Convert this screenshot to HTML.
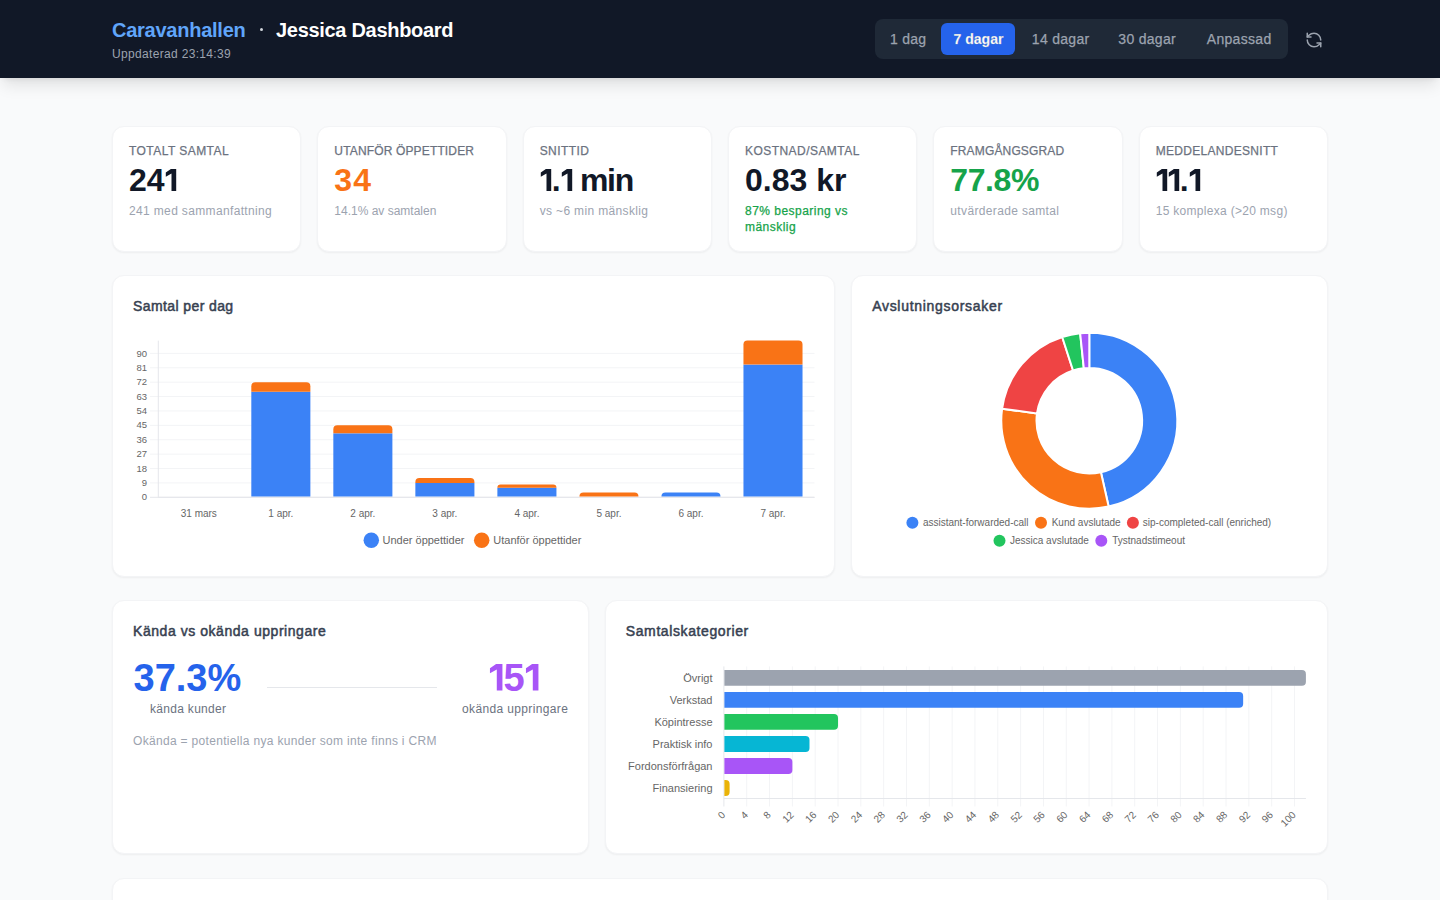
<!DOCTYPE html>
<html lang="sv">
<head>
<meta charset="utf-8">
<title>Jessica Dashboard</title>
<style>
*{box-sizing:border-box;margin:0;padding:0}
html,body{width:1440px;height:900px;overflow:hidden}
body{background:#f9fafb;font-family:"Liberation Sans",sans-serif;position:relative;color:#111827}
.hdr{position:absolute;left:0;top:0;width:1440px;height:78px;background:#111827;box-shadow:0 10px 15px -3px rgba(0,0,0,.1),0 4px 6px -4px rgba(0,0,0,.1);z-index:2}
.t{position:absolute;white-space:nowrap;line-height:1}
.brand{left:112px;top:20px;font-size:20px;font-weight:700;color:#60a5fa;letter-spacing:-.25px}
.dot{position:absolute;left:259.9px;top:28.1px;width:3px;height:3px;border-radius:50%;background:#d1d5db}
.title{left:276px;top:20px;font-size:20px;font-weight:700;color:#fff;letter-spacing:-.3px}
.upd{left:112px;top:48px;font-size:12px;color:#9ca3af;letter-spacing:.33px}
.grp{position:absolute;left:875px;top:19px;width:413px;height:40px;background:#1f2937;border-radius:8px}
.btn{position:absolute;top:4px;height:32px;border-radius:6px;font-size:14px;line-height:32px;text-align:center;color:#9ca3af;font-weight:400;letter-spacing:.3px;text-indent:.3px;-webkit-text-stroke:.25px #9ca3af}
.btn.on{background:#2563eb;color:#fff;font-weight:700;letter-spacing:0;text-indent:1px}
.card{position:absolute;background:#fff;border:1px solid #f3f4f6;border-radius:12px;box-shadow:0 1px 2px rgba(0,0,0,.05)}
.kl{position:absolute;left:16px;top:18px;font-size:12px;line-height:1;color:#6b7280;text-transform:uppercase;letter-spacing:.45px;white-space:nowrap;-webkit-text-stroke:.25px #6b7280}
.kv{position:absolute;left:16px;top:37px;font-size:32px;line-height:1;font-weight:700;color:#111827;white-space:nowrap}
.ks{position:absolute;left:16px;top:76px;font-size:12px;line-height:16px;color:#9ca3af;white-space:nowrap;letter-spacing:.35px}
.ct{position:absolute;left:20px;top:23px;font-size:14px;line-height:1;font-weight:400;color:#374151;white-space:nowrap;-webkit-text-stroke:.5px #374151;letter-spacing:.5px}
svg text{font-family:"Liberation Sans",sans-serif}
.big{position:absolute;font-size:38px;line-height:1;font-weight:700;white-space:nowrap}
.sm{position:absolute;font-size:12px;line-height:1;color:#6b7280;white-space:nowrap}
.divl{position:absolute;left:154px;top:86px;width:170px;height:1px;background:#e5e7eb}
.note{position:absolute;left:20px;top:133.5px;font-size:12px;line-height:1;color:#9ca3af;white-space:nowrap;letter-spacing:.32px}
.one{display:inline-block;vertical-align:baseline;fill:currentColor}
.ov{position:absolute;left:0;top:0;z-index:1;pointer-events:none}
</style>
</head>
<body>
<div class="hdr">
  <div class="t brand">Caravanhallen</div>
  <div class="dot"></div>
  <div class="t title">Jessica Dashboard</div>
  <div class="t upd">Uppdaterad 23:14:39</div>
  <div class="grp">
    <div class="btn" style="left:4px;width:58px">1 dag</div>
    <div class="btn on" style="left:66px;width:74px">7 dagar</div>
    <div class="btn" style="left:145px;width:81px">14 dagar</div>
    <div class="btn" style="left:231px;width:82px">30 dagar</div>
    <div class="btn" style="left:317px;width:94px">Anpassad</div>
  </div>
  <svg style="position:absolute;left:1305px;top:30.5px" width="18" height="18" viewBox="0 0 24 24" fill="none" stroke="#9ca3af" stroke-width="2" stroke-linecap="round" stroke-linejoin="round"><path d="M21 12a9 9 0 0 0-9-9 9.75 9.75 0 0 0-6.74 2.74L3 8"/><path d="M3 3v5h5"/><path d="M3 12a9 9 0 0 0 9 9 9.75 9.75 0 0 0 6.74-2.74L21 16"/><path d="M16 16h5v5"/></svg>
</div>

<!-- KPI cards -->
<div class="card" style="left:112px;top:126px;width:189.33px;height:126px">
  <div class="kl">Totalt samtal</div><div class="kv">24<svg class="one" width="12" height="22" viewBox="0 0 12 22"><path d="M0.8 3.5L5.9 0H11.2V22H6.5V4.6L0.8 7.7Z"/></svg></div><div class="ks">241 med sammanfattning</div>
</div>
<div class="card" style="left:317.33px;top:126px;width:189.33px;height:126px">
  <div class="kl" style="letter-spacing:.15px">Utanför öppettider</div><div class="kv" style="color:#f97316;letter-spacing:1px">34</div><div class="ks" style="letter-spacing:0">14.1% av samtalen</div>
</div>
<div class="card" style="left:522.67px;top:126px;width:189.33px;height:126px">
  <div class="kl">Snittid</div><div class="kv"><svg class="one" width="12" height="22" viewBox="0 0 12 22"><path d="M0.8 3.5L5.9 0H11.2V22H6.5V4.6L0.8 7.7Z"/></svg>.<svg class="one" width="12" height="22" viewBox="0 0 12 22"><path d="M0.8 3.5L5.9 0H11.2V22H6.5V4.6L0.8 7.7Z"/></svg> <span style="letter-spacing:-1.3px;margin-left:-1.5px">min</span></div><div class="ks">vs ~6 min mänsklig</div>
</div>
<div class="card" style="left:728px;top:126px;width:189.33px;height:126px">
  <div class="kl">Kostnad/samtal</div><div class="kv">0.83 kr</div><div class="ks" style="color:#16a34a;letter-spacing:.47px;-webkit-text-stroke:.25px #16a34a">87% besparing vs<br>mänsklig</div>
</div>
<div class="card" style="left:933.33px;top:126px;width:189.33px;height:126px">
  <div class="kl" style="letter-spacing:.15px">Framgångsgrad</div><div class="kv" style="color:#16a34a;letter-spacing:-.4px">77.8%</div><div class="ks">utvärderade samtal</div>
</div>
<div class="card" style="left:1138.67px;top:126px;width:189.33px;height:126px">
  <div class="kl" style="letter-spacing:.3px">Meddelandesnitt</div><div class="kv"><svg class="one" width="12" height="22" viewBox="0 0 12 22"><path d="M0.8 3.5L5.9 0H11.2V22H6.5V4.6L0.8 7.7Z"/></svg><svg class="one" width="12" height="22" viewBox="0 0 12 22"><path d="M0.8 3.5L5.9 0H11.2V22H6.5V4.6L0.8 7.7Z"/></svg>.<svg class="one" width="12" height="22" viewBox="0 0 12 22"><path d="M0.8 3.5L5.9 0H11.2V22H6.5V4.6L0.8 7.7Z"/></svg></div><div class="ks" style="letter-spacing:.3px">15 komplexa (&gt;20 msg)</div>
</div>

<!-- Row 2 -->
<div class="card" style="left:112px;top:275px;width:723.2px;height:302px">
  <div class="ct" style="letter-spacing:.4px">Samtal per dag</div>
</div>
<div class="card" style="left:851.2px;top:275px;width:476.8px;height:302px">
  <div class="ct" style="letter-spacing:.7px">Avslutningsorsaker</div>
</div>

<!-- Row 3 -->
<div class="card" style="left:112px;top:600px;width:476.8px;height:254px">
  <div class="ct" style="letter-spacing:.55px">Kända vs okända uppringare</div>
  <div class="big" style="left:20.5px;top:57.5px;color:#2563eb">37.3%</div>
  <div class="sm" style="left:37px;top:101.5px;letter-spacing:.3px">kända kunder</div>
  <div class="divl"></div>
  <div class="big" style="left:376px;top:57.5px;color:#a855f7"><svg class="one" width="14.4" height="26.4" viewBox="0 0 12 22"><path d="M0.8 3.5L5.9 0H11.2V22H6.5V4.6L0.8 7.7Z"/></svg>5<svg class="one" width="14.4" height="26.4" viewBox="0 0 12 22"><path d="M0.8 3.5L5.9 0H11.2V22H6.5V4.6L0.8 7.7Z"/></svg></div>
  <div class="sm" style="left:349px;top:101.5px;letter-spacing:.36px">okända uppringare</div>
  <div class="note">Okända = potentiella nya kunder som inte finns i CRM</div>
</div>
<div class="card" style="left:604.8px;top:600px;width:723.2px;height:254px">
  <div class="ct" style="letter-spacing:.6px">Samtalskategorier</div>
</div>

<!-- Row 4 -->
<div class="card" style="left:112px;top:878px;width:1216px;height:200px"></div>

<svg class="ov" width="1440" height="900" viewBox="0 0 1440 900">
<line x1="150" y1="497.3" x2="814.5" y2="497.3" stroke="#e5e7eb" stroke-width="1"/>
<text x="147" y="500.4" text-anchor="end" font-size="9.5" fill="#666">0</text>
<line x1="150" y1="482.91" x2="814.5" y2="482.91" stroke="#f3f4f6" stroke-width="1"/>
<text x="147" y="486.01" text-anchor="end" font-size="9.5" fill="#666">9</text>
<line x1="150" y1="468.52" x2="814.5" y2="468.52" stroke="#f3f4f6" stroke-width="1"/>
<text x="147" y="471.62" text-anchor="end" font-size="9.5" fill="#666">18</text>
<line x1="150" y1="454.13" x2="814.5" y2="454.13" stroke="#f3f4f6" stroke-width="1"/>
<text x="147" y="457.23" text-anchor="end" font-size="9.5" fill="#666">27</text>
<line x1="150" y1="439.74" x2="814.5" y2="439.74" stroke="#f3f4f6" stroke-width="1"/>
<text x="147" y="442.84" text-anchor="end" font-size="9.5" fill="#666">36</text>
<line x1="150" y1="425.35" x2="814.5" y2="425.35" stroke="#f3f4f6" stroke-width="1"/>
<text x="147" y="428.45" text-anchor="end" font-size="9.5" fill="#666">45</text>
<line x1="150" y1="410.96" x2="814.5" y2="410.96" stroke="#f3f4f6" stroke-width="1"/>
<text x="147" y="414.06" text-anchor="end" font-size="9.5" fill="#666">54</text>
<line x1="150" y1="396.57" x2="814.5" y2="396.57" stroke="#f3f4f6" stroke-width="1"/>
<text x="147" y="399.67" text-anchor="end" font-size="9.5" fill="#666">63</text>
<line x1="150" y1="382.18" x2="814.5" y2="382.18" stroke="#f3f4f6" stroke-width="1"/>
<text x="147" y="385.28" text-anchor="end" font-size="9.5" fill="#666">72</text>
<line x1="150" y1="367.79" x2="814.5" y2="367.79" stroke="#f3f4f6" stroke-width="1"/>
<text x="147" y="370.89" text-anchor="end" font-size="9.5" fill="#666">81</text>
<line x1="150" y1="353.4" x2="814.5" y2="353.4" stroke="#f3f4f6" stroke-width="1"/>
<text x="147" y="356.5" text-anchor="end" font-size="9.5" fill="#666">90</text>
<line x1="158.3" y1="340.61" x2="158.3" y2="497.3" stroke="#e5e7eb" stroke-width="1"/>
<line x1="158.3" y1="497.3" x2="814.5" y2="497.3" stroke="#e5e7eb" stroke-width="1"/>
<text x="198.81" y="516.9" text-anchor="middle" font-size="10" fill="#666">31 mars</text>
<text x="280.84" y="516.9" text-anchor="middle" font-size="10" fill="#666">1 apr.</text>
<rect x="251.31" y="391.77" width="59.06" height="104.73" fill="#3b82f6"/>
<path d="M251.31 391.77V386.18Q251.31 382.18 255.31 382.18H306.37Q310.37 382.18 310.37 386.18V391.77Z" fill="#f97316"/>
<text x="362.86" y="516.9" text-anchor="middle" font-size="10" fill="#666">2 apr.</text>
<rect x="333.33" y="433.34" width="59.06" height="63.16" fill="#3b82f6"/>
<path d="M333.33 433.34V429.35Q333.33 425.35 337.33 425.35H388.39Q392.39 425.35 392.39 429.35V433.34Z" fill="#f97316"/>
<text x="444.89" y="516.9" text-anchor="middle" font-size="10" fill="#666">3 apr.</text>
<rect x="415.36" y="482.91" width="59.06" height="13.59" fill="#3b82f6"/>
<path d="M415.36 482.91V482.11Q415.36 478.11 419.36 478.11H470.42Q474.42 478.11 474.42 482.11V482.91Z" fill="#f97316"/>
<text x="526.91" y="516.9" text-anchor="middle" font-size="10" fill="#666">4 apr.</text>
<rect x="497.38" y="487.71" width="59.06" height="8.79" fill="#3b82f6"/>
<path d="M497.38 487.71V487.71Q497.38 484.51 500.58 484.51H553.24Q556.44 484.51 556.44 487.71V487.71Z" fill="#f97316"/>
<text x="608.94" y="516.9" text-anchor="middle" font-size="10" fill="#666">5 apr.</text>
<path d="M579.41 496.5V496.5Q579.41 492.5 583.41 492.5H634.47Q638.47 492.5 638.47 496.5V496.5Z" fill="#f97316"/>
<text x="690.96" y="516.9" text-anchor="middle" font-size="10" fill="#666">6 apr.</text>
<path d="M661.43 496.5V496.5Q661.43 492.5 665.43 492.5H716.49Q720.49 492.5 720.49 496.5V496.5Z" fill="#3b82f6"/>
<text x="772.99" y="516.9" text-anchor="middle" font-size="10" fill="#666">7 apr.</text>
<rect x="743.46" y="364.59" width="59.06" height="131.91" fill="#3b82f6"/>
<path d="M743.46 364.59V344.61Q743.46 340.61 747.46 340.61H798.52Q802.52 340.61 802.52 344.61V364.59Z" fill="#f97316"/>
<circle cx="371.3" cy="540.3" r="7.75" fill="#3b82f6"/>
<text x="382.5" y="543.8" font-size="11" fill="#666">Under öppettider</text>
<circle cx="481.7" cy="540.3" r="7.75" fill="#f97316"/>
<text x="493.3" y="543.8" font-size="11" fill="#666">Utanför öppettider</text>
<path d="M1089.3 332.7A88 88 0 0 1 1108.64 506.55L1100.91 472.21A52.8 52.8 0 0 0 1089.3 367.9Z" fill="#3b82f6" stroke="#fff" stroke-width="2" stroke-linejoin="round"/>
<path d="M1108.64 506.55A88 88 0 0 1 1002.12 408.69L1036.99 413.5A52.8 52.8 0 0 0 1100.91 472.21Z" fill="#f97316" stroke="#fff" stroke-width="2" stroke-linejoin="round"/>
<path d="M1002.12 408.69A88 88 0 0 1 1062.22 336.97L1073.05 370.46A52.8 52.8 0 0 0 1036.99 413.5Z" fill="#ef4444" stroke="#fff" stroke-width="2" stroke-linejoin="round"/>
<path d="M1062.22 336.97A88 88 0 0 1 1080.14 333.18L1083.8 368.19A52.8 52.8 0 0 0 1073.05 370.46Z" fill="#22c55e" stroke="#fff" stroke-width="2" stroke-linejoin="round"/>
<path d="M1080.14 333.18A88 88 0 0 1 1089.3 332.7L1089.3 367.9A52.8 52.8 0 0 0 1083.8 368.19Z" fill="#a855f7" stroke="#fff" stroke-width="2" stroke-linejoin="round"/>
<circle cx="912.4" cy="522.8" r="6" fill="#3b82f6"/>
<text x="922.9" y="526.4" font-size="10" fill="#666">assistant-forwarded-call</text>
<circle cx="1041" cy="522.8" r="6" fill="#f97316"/>
<text x="1051.7" y="526.4" font-size="10" fill="#666">Kund avslutade</text>
<circle cx="1132.9" cy="522.8" r="6" fill="#ef4444"/>
<text x="1142.8" y="526.4" font-size="10" fill="#666">sip-completed-call (enriched)</text>
<circle cx="999.5" cy="540.8" r="6" fill="#22c55e"/>
<text x="1010" y="544.4" font-size="10" fill="#666">Jessica avslutade</text>
<circle cx="1101.3" cy="540.8" r="6" fill="#a855f7"/>
<text x="1112.2" y="544.4" font-size="10" fill="#666">Tystnadstimeout</text>
<line x1="723.9" y1="666.4" x2="723.9" y2="806.5" stroke="#e5e7eb" stroke-width="1"/>
<text transform="translate(725.9 815.5) rotate(-45)" text-anchor="end" font-size="10" fill="#666">0</text>
<line x1="746.72" y1="666.4" x2="746.72" y2="806.5" stroke="#f3f4f6" stroke-width="1"/>
<text transform="translate(748.72 815.5) rotate(-45)" text-anchor="end" font-size="10" fill="#666">4</text>
<line x1="769.55" y1="666.4" x2="769.55" y2="806.5" stroke="#f3f4f6" stroke-width="1"/>
<text transform="translate(771.55 815.5) rotate(-45)" text-anchor="end" font-size="10" fill="#666">8</text>
<line x1="792.37" y1="666.4" x2="792.37" y2="806.5" stroke="#f3f4f6" stroke-width="1"/>
<text transform="translate(794.37 815.5) rotate(-45)" text-anchor="end" font-size="10" fill="#666">12</text>
<line x1="815.2" y1="666.4" x2="815.2" y2="806.5" stroke="#f3f4f6" stroke-width="1"/>
<text transform="translate(817.2 815.5) rotate(-45)" text-anchor="end" font-size="10" fill="#666">16</text>
<line x1="838.02" y1="666.4" x2="838.02" y2="806.5" stroke="#f3f4f6" stroke-width="1"/>
<text transform="translate(840.02 815.5) rotate(-45)" text-anchor="end" font-size="10" fill="#666">20</text>
<line x1="860.84" y1="666.4" x2="860.84" y2="806.5" stroke="#f3f4f6" stroke-width="1"/>
<text transform="translate(862.84 815.5) rotate(-45)" text-anchor="end" font-size="10" fill="#666">24</text>
<line x1="883.67" y1="666.4" x2="883.67" y2="806.5" stroke="#f3f4f6" stroke-width="1"/>
<text transform="translate(885.67 815.5) rotate(-45)" text-anchor="end" font-size="10" fill="#666">28</text>
<line x1="906.49" y1="666.4" x2="906.49" y2="806.5" stroke="#f3f4f6" stroke-width="1"/>
<text transform="translate(908.49 815.5) rotate(-45)" text-anchor="end" font-size="10" fill="#666">32</text>
<line x1="929.32" y1="666.4" x2="929.32" y2="806.5" stroke="#f3f4f6" stroke-width="1"/>
<text transform="translate(931.32 815.5) rotate(-45)" text-anchor="end" font-size="10" fill="#666">36</text>
<line x1="952.14" y1="666.4" x2="952.14" y2="806.5" stroke="#f3f4f6" stroke-width="1"/>
<text transform="translate(954.14 815.5) rotate(-45)" text-anchor="end" font-size="10" fill="#666">40</text>
<line x1="974.96" y1="666.4" x2="974.96" y2="806.5" stroke="#f3f4f6" stroke-width="1"/>
<text transform="translate(976.96 815.5) rotate(-45)" text-anchor="end" font-size="10" fill="#666">44</text>
<line x1="997.79" y1="666.4" x2="997.79" y2="806.5" stroke="#f3f4f6" stroke-width="1"/>
<text transform="translate(999.79 815.5) rotate(-45)" text-anchor="end" font-size="10" fill="#666">48</text>
<line x1="1020.61" y1="666.4" x2="1020.61" y2="806.5" stroke="#f3f4f6" stroke-width="1"/>
<text transform="translate(1022.61 815.5) rotate(-45)" text-anchor="end" font-size="10" fill="#666">52</text>
<line x1="1043.44" y1="666.4" x2="1043.44" y2="806.5" stroke="#f3f4f6" stroke-width="1"/>
<text transform="translate(1045.44 815.5) rotate(-45)" text-anchor="end" font-size="10" fill="#666">56</text>
<line x1="1066.26" y1="666.4" x2="1066.26" y2="806.5" stroke="#f3f4f6" stroke-width="1"/>
<text transform="translate(1068.26 815.5) rotate(-45)" text-anchor="end" font-size="10" fill="#666">60</text>
<line x1="1089.08" y1="666.4" x2="1089.08" y2="806.5" stroke="#f3f4f6" stroke-width="1"/>
<text transform="translate(1091.08 815.5) rotate(-45)" text-anchor="end" font-size="10" fill="#666">64</text>
<line x1="1111.91" y1="666.4" x2="1111.91" y2="806.5" stroke="#f3f4f6" stroke-width="1"/>
<text transform="translate(1113.91 815.5) rotate(-45)" text-anchor="end" font-size="10" fill="#666">68</text>
<line x1="1134.73" y1="666.4" x2="1134.73" y2="806.5" stroke="#f3f4f6" stroke-width="1"/>
<text transform="translate(1136.73 815.5) rotate(-45)" text-anchor="end" font-size="10" fill="#666">72</text>
<line x1="1157.56" y1="666.4" x2="1157.56" y2="806.5" stroke="#f3f4f6" stroke-width="1"/>
<text transform="translate(1159.56 815.5) rotate(-45)" text-anchor="end" font-size="10" fill="#666">76</text>
<line x1="1180.38" y1="666.4" x2="1180.38" y2="806.5" stroke="#f3f4f6" stroke-width="1"/>
<text transform="translate(1182.38 815.5) rotate(-45)" text-anchor="end" font-size="10" fill="#666">80</text>
<line x1="1203.2" y1="666.4" x2="1203.2" y2="806.5" stroke="#f3f4f6" stroke-width="1"/>
<text transform="translate(1205.2 815.5) rotate(-45)" text-anchor="end" font-size="10" fill="#666">84</text>
<line x1="1226.03" y1="666.4" x2="1226.03" y2="806.5" stroke="#f3f4f6" stroke-width="1"/>
<text transform="translate(1228.03 815.5) rotate(-45)" text-anchor="end" font-size="10" fill="#666">88</text>
<line x1="1248.85" y1="666.4" x2="1248.85" y2="806.5" stroke="#f3f4f6" stroke-width="1"/>
<text transform="translate(1250.85 815.5) rotate(-45)" text-anchor="end" font-size="10" fill="#666">92</text>
<line x1="1271.68" y1="666.4" x2="1271.68" y2="806.5" stroke="#f3f4f6" stroke-width="1"/>
<text transform="translate(1273.68 815.5) rotate(-45)" text-anchor="end" font-size="10" fill="#666">96</text>
<line x1="1294.5" y1="666.4" x2="1294.5" y2="806.5" stroke="#f3f4f6" stroke-width="1"/>
<text transform="translate(1296.5 815.5) rotate(-45)" text-anchor="end" font-size="10" fill="#666">100</text>
<line x1="723.9" y1="798.5" x2="1305.91" y2="798.5" stroke="#e5e7eb" stroke-width="1"/>
<text x="712.5" y="681.91" text-anchor="end" font-size="11" fill="#666">Övrigt</text>
<path d="M724.4 669.98H1301.91Q1305.91 669.98 1305.91 673.98V681.83Q1305.91 685.83 1301.91 685.83H724.4Z" fill="#9ca3af"/>
<text x="712.5" y="703.92" text-anchor="end" font-size="11" fill="#666">Verkstad</text>
<path d="M724.4 692H1239.15Q1243.15 692 1243.15 696V703.85Q1243.15 707.85 1239.15 707.85H724.4Z" fill="#3b82f6"/>
<text x="712.5" y="725.94" text-anchor="end" font-size="11" fill="#666">Köpintresse</text>
<path d="M724.4 714.02H834.02Q838.02 714.02 838.02 718.02V725.87Q838.02 729.87 834.02 729.87H724.4Z" fill="#22c55e"/>
<text x="712.5" y="747.96" text-anchor="end" font-size="11" fill="#666">Praktisk info</text>
<path d="M724.4 736.03H805.49Q809.49 736.03 809.49 740.03V747.88Q809.49 751.88 805.49 751.88H724.4Z" fill="#06b6d4"/>
<text x="712.5" y="769.98" text-anchor="end" font-size="11" fill="#666">Fordonsförfrågan</text>
<path d="M724.4 758.05H788.37Q792.37 758.05 792.37 762.05V769.9Q792.37 773.9 788.37 773.9H724.4Z" fill="#a855f7"/>
<text x="712.5" y="791.99" text-anchor="end" font-size="11" fill="#666">Finansiering</text>
<path d="M724.4 780.07H725.61Q729.61 780.07 729.61 784.07V791.92Q729.61 795.92 725.61 795.92H724.4Z" fill="#eab308"/>
</svg>
</body>
</html>
